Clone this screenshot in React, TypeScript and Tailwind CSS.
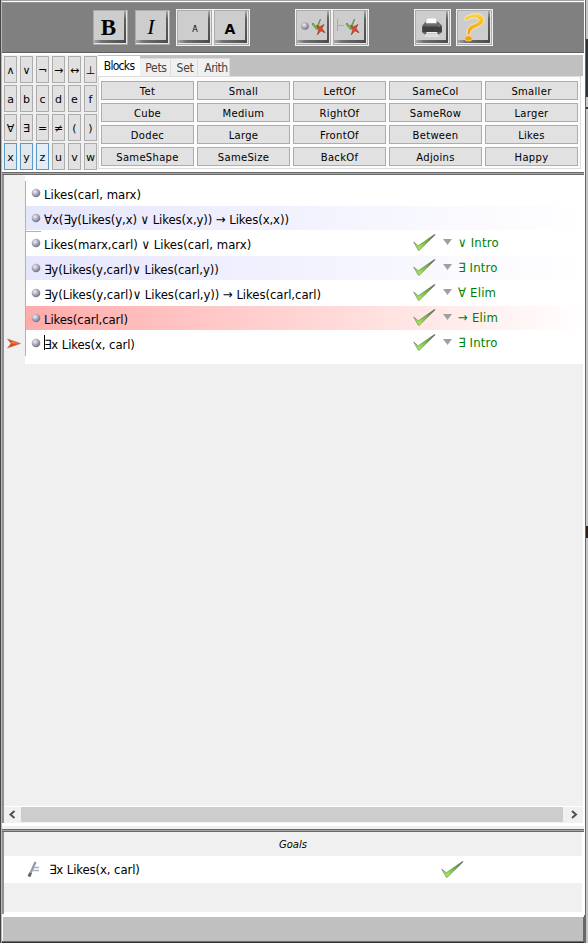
import React from "react";

const sans = "font-['DejaVu_Sans',sans-serif]";
const condensed = "font-['DejaVu_Sans_Condensed','DejaVu_Sans',sans-serif]";

const symbols = [
  ["∧", "∨", "¬", "→", "↔", "⊥"],
  ["a", "b", "c", "d", "e", "f"],
  ["∀", "∃", "=", "≠", "(", ")"],
  ["x", "y", "z", "u", "v", "w"],
];

const predicates = [
  ["Tet", "Small", "LeftOf", "SameCol", "Smaller"],
  ["Cube", "Medium", "RightOf", "SameRow", "Larger"],
  ["Dodec", "Large", "FrontOf", "Between", "Likes"],
  ["SameShape", "SameSize", "BackOf", "Adjoins", "Happy"],
];

type Step = { text: string; tracking?: string; rule?: string; bg?: string; current?: boolean };

const blue = "bg-linear-to-r from-[#e6e6fd] to-white";
const steps: Step[] = [
  { text: "Likes(carl, marx)", tracking: "tracking-[-0.03px]" },
  { text: "∀x(∃y(Likes(y,x) ∨ Likes(x,y)) → Likes(x,x))", tracking: "tracking-[-0.09px]", bg: blue },
  { text: "Likes(marx,carl) ∨ Likes(carl, marx)", rule: "∨ Intro" },
  { text: "∃y(Likes(y,carl)∨ Likes(carl,y))", tracking: "tracking-[-0.08px]", rule: "∃ Intro", bg: blue },
  { text: "∃y(Likes(y,carl)∨ Likes(carl,y)) → Likes(carl,carl)", tracking: "tracking-[-0.06px]", rule: "∀ Elim" },
  { text: "Likes(carl,carl)", tracking: "tracking-[-0.1px]", rule: "→ Elim", bg: "bg-linear-to-r from-[#ffabab] to-white" },
  { text: "∃x Likes(x, carl)", tracking: "tracking-[-0.1px]", rule: "∃ Intro", current: true },
];

function Check() {
  return (
    <svg width="23" height="18" viewBox="0 0 23 18" className="shrink-0">
      <defs>
        <linearGradient id="chk" x1="0" y1="1" x2="1" y2="0">
          <stop offset="0.25" stopColor="#9be548" />
          <stop offset="0.6" stopColor="#70ad45" />
          <stop offset="1" stopColor="#42513d" />
        </linearGradient>
      </defs>
      <path d="M.7 8 5.3 11.8 21.8.2 22 1 6.2 16.3 5.4 16.3Z" fill="url(#chk)" stroke="#71856b" strokeWidth=".7" />
    </svg>
  );
}

function Bullet() {
  return (
    <svg width="10" height="10" viewBox="0 0 10 10" className="shrink-0">
      <defs>
        <radialGradient id="ball" cx="0.38" cy="0.35" r="0.65">
          <stop offset="0" stopColor="#f2f2fa" />
          <stop offset="0.45" stopColor="#b5b5c5" />
          <stop offset="1" stopColor="#737385" />
        </radialGradient>
      </defs>
      <circle cx="5" cy="5" r="4.3" fill="url(#ball)" />
    </svg>
  );
}

function ToolButton({ children, framed = false }: { children?: React.ReactNode; framed?: boolean }) {
  return (
    <div className={framed ? "size-[37px] shrink-0 border border-[#f2f2f2]" : "my-px size-[35px] shrink-0"}>
      <div className="size-[35px] border border-[#acacac]">
        <div className="size-[33px] border-r border-b border-[#e5e5e5]">
          <div className="flex size-8 bg-[#cdcdcd]">
            <div className="flex h-[29px] w-[30px] items-center justify-center">{children}</div>
            <div className="h-8 w-0.5 bg-linear-to-b from-[#aaaaaa] via-[#606060] via-25% to-[#4b4b4b]" />
          </div>
          <div className="-mt-[3px] h-[3px] w-8 bg-linear-to-r from-[#aaaaaa] via-[#707070] via-25% to-[#4b4b4b]" />
        </div>
      </div>
    </div>
  );
}

function Marks() {
  return (
    <g>
      <path d="m0 5 1-1 3.6 4.2L8.5 0 5.4 10.5 3.9 10Z" fill="#79cf3c" stroke="#587d45" strokeWidth=".7" />
      <path d="m4.5 6.5 3.3 1.3L12 5.5 10 9.3l3 4.5-4-2-3.7 4L6.8 10.8Z" fill="#e0492c" stroke="#8d3022" strokeWidth=".6" />
    </g>
  );
}

function Toolbar() {
  return (
    <div className="flex h-[49px] items-start bg-[#808080] pt-1.5 pl-[91px]">
      <ToolButton><b className="pt-[3px] pr-0.5 font-['Liberation_Serif',serif] text-[23px] leading-[29px] tracking-[-1px]">B</b></ToolButton>
      <div className="w-[7px]" />
      <ToolButton><i className="pt-px font-['Liberation_Serif',serif] text-[22px] leading-[29px]">I</i></ToolButton>
      <div className="w-1.5" />
      <ToolButton framed><span className={`pt-2 pl-1 text-[8px] leading-none ${sans}`}>A</span></ToolButton>
      <ToolButton framed><span className={`pt-1.5 text-[14px] leading-none font-semibold ${sans}`}>A</span></ToolButton>
      <div className="w-[45px]" />
      <ToolButton framed>
        <svg width="30" height="29" viewBox="0 0 30 29">
          <circle cx="8" cy="15" r="3.8" fill="url(#ball)" />
          <g transform="translate(15 8)"><Marks /></g>
        </svg>
      </ToolButton>
      <ToolButton framed>
        <svg width="30" height="29" viewBox="0 0 30 29">
          <path d="M3.5 8v12M3.5 14.5H10" stroke="#aaa" fill="none" />
          <g transform="translate(12 8)"><Marks /></g>
        </svg>
      </ToolButton>
      <div className="w-[45px]" />
      <ToolButton framed>
        <svg width="30" height="29" viewBox="0 0 30 29">
          <g transform="translate(.8 .5)">
            <path d="M5.5 14 9 10h12l4 4v7l-3 2H8l-2.5-2v-7Z" fill="#666" />
            <path d="m10 8 1-1h8l1 5H9Z" fill="#fff" />
            <path d="M5.5 15h19.5v5.500H5.5Z" fill="#404040" />
            <path d="m9 12 12 0v2H9Z" fill="#707070" />
            <path d="M10 20.500h10l2 4.500H8Z" fill="#f2f2f2" />
            <path d="M10 22h10M9 23.5h12" stroke="#aaa" strokeWidth=".6" />
            <circle cx="22.5" cy="14.5" r=".8" fill="#ff5b35" />
          </g>
        </svg>
      </ToolButton>
      <div className="w-[5px]" />
      <ToolButton framed>
        <svg width="30" height="29" viewBox="0 0 30 29" className="overflow-visible">
          <defs>
            <linearGradient id="q" x1="0" y1="0" x2="0" y2="1">
              <stop offset="0" stopColor="#ffd43a" /><stop offset="1" stopColor="#f29a00" />
            </linearGradient>
          </defs>
          <path d="M6 7.500C10 3.500 18 1.5 22.5 3.500c6 3 4 9-1 11.500-5 2.500-8 3-9 6l-.5 3H9.500c-1-6 1-9 6.500-11 4-1.500 6-3.500 4.500-5-3-2-8-1.500-13 1.500Z" fill="url(#q)" stroke="#f7efd9" strokeWidth=".8" />
          <ellipse cx="10.5" cy="27.500" rx="3.7" ry="2.700" fill="#f5a100" stroke="#e9e2ce" strokeWidth=".7" />
        </svg>
      </ToolButton>
    </div>
  );
}

function Palette() {
  return (
    <div className="flex h-[117px] bg-white pt-0.5">
      <div className="flex w-[96px] shrink-0 flex-col gap-0.5 bg-[#f0f0f0] pt-px pl-0.5">
        {symbols.map((row, r) => (
          <div key={r} className="flex h-[27px] gap-[3px]">
            {row.map((s, c) => (
              <div key={s} className={`flex h-[27px] w-[13px] items-center justify-center border pt-0.5 text-[11px] leading-none ${sans} ${r === 3 && c < 3 ? (c === 2 ? "border-[#5d98c7] bg-[#e2edf5]" : "border-[#5d98c7] bg-[#e1e8ed]") : "border-[#adadad] bg-[#e1e1e1]"}`}>
                {s}
              </div>
            ))}
          </div>
        ))}
      </div>
      <div className="flex w-[485px] flex-col">
        <div className={`flex h-[21px] items-end bg-[#c0c0c0] text-[12px] text-[#444] ${condensed}`}>
          <div className="flex h-5 w-[42px] items-center justify-center bg-white text-black tracking-[-0.7px]">Blocks</div>
          <div className="flex h-[18px] w-[31px] items-center justify-center border-t border-r border-[#dcdcdc] bg-[#f0f0f0] pl-0.5 tracking-[-0.3px]">Pets</div>
          <div className="flex h-[18px] w-[27px] items-center justify-center border-t border-r border-[#dcdcdc] bg-[#f0f0f0] pl-0.5 tracking-[-0.3px]">Set</div>
          <div className="flex h-[18px] w-[32px] items-center justify-center border-t border-r border-[#dcdcdc] bg-[#f0f0f0] pl-[5px] tracking-[-0.5px]">Arith</div>
        </div>
        <div className="h-[93px] w-[483px] border border-[#dcdcdc] bg-[#fcfcfc] pt-1 pl-0.5">
          <div className="grid w-[477px] grid-cols-5 gap-[3px]">
            {predicates.flat().map((p) => (
              <div key={p} className={`flex h-[19px] items-center justify-center border border-[#adadad] bg-[#e1e1e1] pt-[3px] text-[10px] leading-none tracking-[0.3px] ${sans}`}>{p}</div>
            ))}
          </div>
        </div>
      </div>
    </div>
  );
}

function Proof() {
  return (
    <div className="flex h-[631px] w-[579px] flex-col bg-[#f0f0f0]">
      <div className="flex h-[189px]">
        <div className="flex w-[21px] flex-col items-start bg-[#f0f0f0] pt-[163px] pl-[3px]">
          <svg width="15" height="11" viewBox="0 0 15 11">
            <path d="m.5 1 13 4.5-13 4.5L4 5.5Z" fill="#e2451c" stroke="#a8786a" strokeWidth=".6" />
            <path d="m4 3.500 8 2H5Z" fill="#ff8a3b" />
          </svg>
        </div>
        <div className="flex w-[558px] flex-col bg-white pt-1.5">
          <div className="h-[175px] border-l border-[#b2b2b2]">
            {steps.map((s, i) => (
              <div key={i} className="relative h-[25px]">
                <div className={`flex h-6 items-center ${s.bg ?? ""}`}>
                  <div className="flex w-[387px] items-center pl-[5px]">
                    <Bullet />
                    <div className={`ml-[3px] flex items-center pt-[3px] text-[13px] leading-none whitespace-pre ${condensed} ${s.tracking ?? ""}`}>
                      {s.current && <span className="-mr-px -mt-1 h-[15px] w-px bg-black" />}
                      {s.text}
                    </div>
                  </div>
                  {s.rule && (
                    <div className={`flex items-center text-[13px] leading-5 text-[#008000] ${condensed}`}>
                      <Check />
                      <svg width="9" height="6" className="-mt-0.5 ml-[7px]"><path d="M0 0h9L4.500 6Z" fill="#a0a0a0" /></svg>
                      <span className="ml-[6px] tracking-[0.2px]">{s.rule}</span>
                    </div>
                  )}
                </div>
                {i === 2 && <div className="absolute top-0 left-0 h-px w-[15px] bg-[#b2b2b2]" />}
              </div>
            ))}
          </div>
        </div>
      </div>
      <div className="flex-1" />
    </div>
  );
}

function Scrollbar() {
  return (
    <div className="flex h-[17px] w-[579px] items-center border-t border-white bg-[#f0f0f0]">
      <svg width="17" height="16"><path d="m10.5 4-4 3.5 4 3.5" fill="none" stroke="#505050" strokeWidth="2" /></svg>
      <div className="mb-px h-[15px] w-[542px] bg-[#cdcdcd]" />
      <svg width="20" height="16"><path d="m9 4 4 3.5L9 11" fill="none" stroke="#505050" strokeWidth="2" /></svg>
    </div>
  );
}

function Goals() {
  return (
    <div className={`h-[80px] w-[578px] bg-[#f0f0f0] ${sans}`}>
      <div className="flex h-6 items-center justify-center pt-px text-[10px] italic">Goals</div>
      <div className="flex h-[27px] items-center bg-white">
        <svg width="13" height="17" viewBox="0 0 13 17" className="ml-[23px]">
          <path d="M8.5 1 2 15.5" stroke="#8d99a5" strokeWidth="2.2" />
          <path d="M3.6 12 2 15.5" stroke="#62626b" strokeWidth="3" />
          <path d="M7 6.5h5M6 9.5h6" stroke="#a8b2bd" strokeWidth="1.3" />
        </svg>
        <div className={`ml-[9px] w-[392px] text-[13px] tracking-[-0.1px] ${condensed}`}>∃x Likes(x, carl)</div>
        <Check />
      </div>
    </div>
  );
}

export default function App() {
  return (
    <div className="flex h-[943px] w-[588px] overflow-hidden bg-white text-black">
      <div className="w-px bg-[#454545]" />
      <div className="flex w-[583px] flex-col border-l border-[#b8b8b8]">
        <div className="h-px bg-[#a0a0a0]" />
        <div className="h-px bg-white" />
        <div className="h-px bg-[#929292]" />
        <Toolbar />
        <div className="h-px bg-[#606060]" />
        <Palette />
        <div className="h-0.5 bg-white" />
        <div className="h-[3px] border-y border-[#696969] bg-[#a6a6a6]" />
        <div className="h-[648px] border-l-2 border-[#909090] bg-white">
          <Proof />
          <Scrollbar />
        </div>
        <div className="h-[3px] bg-white" />
        <div className="h-[3px] bg-[#f0f0f0]" />
        <div className="h-[3px] border-y border-[#696969] bg-[#a6a6a6]" />
        <div className="h-[82px] border-l-2 border-[#909090] bg-white"><Goals /></div>
        <div className="h-[3px] bg-white" />
        <div className="ml-px h-6 border-r border-[#696969] bg-[#c0c0c0]" />
        <div className="h-px bg-[#696969]" />
        <div className="h-px bg-[#333]" />
      </div>
      <div className="flex w-0.5">
        <div className="flex w-px flex-col bg-white">
          <div className="h-[915px]" />
          <div className="h-7 bg-[#696969]" />
        </div>
        <div className="w-px bg-[#666]" />
      </div>
      <div className="flex w-0.5 flex-col bg-[#c8c8c8]">
        <div className="h-[39px]" />
        <div className="h-[56px] bg-[#303638]" />
        <div className="h-[14px] border-y-2 border-[#333] bg-[#ccc]" />
        <div className="h-[417px]" />
        <div className="h-3 bg-[#332018]" />
      </div>
    </div>
  );
}
